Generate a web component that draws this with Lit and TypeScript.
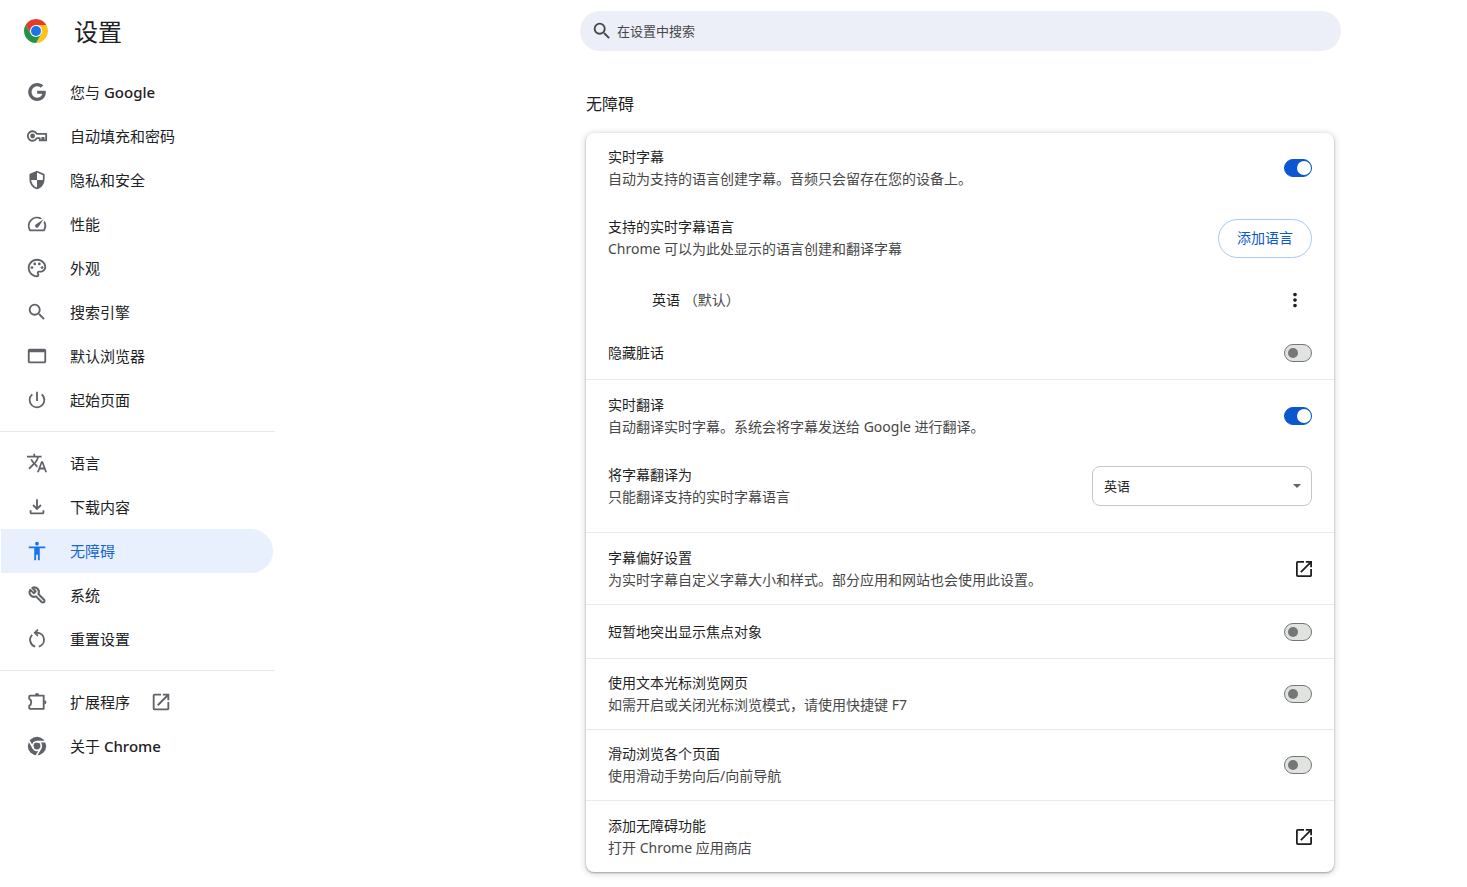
import { LitElement, html, css, svg, nothing } from "lit";
import { customElement, property } from "lit/decorators.js";

const icons: Record<string, unknown> = {
  google: svg`<path transform="translate(2.2 2.2) scale(.816)" d="M12.24 10.285V14.4h6.806c-.275 1.765-2.056 5.174-6.806 5.174-4.095 0-7.439-3.389-7.439-7.574s3.345-7.574 7.439-7.574c2.33 0 3.891.989 4.785 1.849l3.254-3.138C18.189 1.186 15.479 0 12.24 0c-6.635 0-12 5.365-12 12s5.365 12 12 12c6.926 0 11.52-4.869 11.52-11.726 0-.788-.085-1.39-.189-1.989H12.24z"/>`,
  key: svg`<path d="M11.800 9.600H22V16.800H19.300V14H17.700V16.800H15V14.400H11.800A5.200 5.200 0 1 1 11.800 9.600Z" fill="none" stroke="currentColor" stroke-width="2" stroke-linejoin="round"/><circle cx="7.200" cy="12" r="2.600"/>`,
  shield: svg`<path transform="translate(23 1) scale(-.917 .917)" d="M12 1L3 5v6c0 5.550 3.840 10.740 9 12 5.160-1.260 9-6.450 9-12V5l-9-4zm0 10.990h7c-.53 4.120-3.280 7.790-7 8.940V12H5V6.300l7-3.110v8.800z"/>`,
  speed: svg`<path d="m20.38 8.57-1.23 1.85a8 8 0 0 1-.22 7.58H5.07A8 8 0 0 1 15.58 6.85l1.85-1.23A10 10 0 0 0 3.35 19a2 2 0 0 0 1.72 1h13.85a2 2 0 0 0 1.740-1 10 10 0 0 0-.27-10.440zm-9.790 6.840a2 2 0 0 0 2.830 0l5.660-8.490-8.490 5.660a2 2 0 0 0 0 2.830z"/>`,
  palette: svg`<path d="M12 22C6.490 22 2 17.510 2 12S6.490 2 12 2s10 4.040 10 9c0 3.310-2.690 6-6 6h-1.770c-.28 0-.5.22-.5.5 0 .12.05.23.13.33.41.47.64 1.060.64 1.670A2.500 2.500 0 0 1 12 22zm0-18c-4.410 0-8 3.590-8 8s3.590 8 8 8c.28 0 .5-.22.5-.5a.54.54 0 0 0-.14-.35c-.41-.46-.63-1.050-.63-1.650a2.500 2.500 0 0 1 2.500-2.500H16c2.210 0 4-1.790 4-4 0-3.860-3.590-7-8-7z"/><circle cx="6.500" cy="11.500" r="1.500"/><circle cx="9.500" cy="7.500" r="1.500"/><circle cx="14.500" cy="7.500" r="1.500"/><circle cx="17.500" cy="11.500" r="1.500"/>`,
  search: svg`<path d="M15.500 14h-.79l-.28-.27A6.471 6.471 0 0 0 16 9.500 6.500 6.500 0 1 0 9.500 16c1.610 0 3.090-.59 4.230-1.570l.27.28v.79l5 4.990L20.490 19l-4.990-5zm-6 0C7.010 14 5 11.990 5 9.500S7.010 5 9.500 5 14 7.010 14 9.500 11.990 14 9.500 14z"/>`,
  browser: svg`<path d="M20 4H4c-1.100 0-2 .9-2 2v12c0 1.100.9 2 2 2h16c1.100 0 2-.9 2-2V6c0-1.100-.9-2-2-2zm0 14H4V8h16v10z"/>`,
  power: svg`<path d="M13 3h-2v10h2V3zm4.830 2.170-1.420 1.420A6.920 6.920 0 0 1 19 12c0 3.870-3.130 7-7 7A6.995 6.995 0 0 1 7.580 6.580L6.170 5.170A8.932 8.932 0 0 0 3 12a9 9 0 0 0 18 0c0-2.740-1.230-5.180-3.170-6.830z"/>`,
  translate: svg`<path d="m12.870 15.070-2.540-2.510.03-.03A17.520 17.520 0 0 0 14.070 6H17V4h-7V2H8v2H1v1.990h11.170C11.500 7.920 10.440 9.750 9 11.350 8.070 10.320 7.300 9.190 6.690 8h-2c.73 1.630 1.730 3.170 2.980 4.560l-5.090 5.020L4 19l5-5 3.110 3.110.76-2.040zM18.500 10h-2L12 22h2l1.120-3h4.750L21 22h2l-4.500-12zm-2.620 7 1.620-4.330L19.120 17h-3.240z"/>`,
  download: svg`<path d="m12 15.500-5-5 1.400-1.400 2.600 2.600V3.500h2v8.200l2.600-2.600L17 10.500l-5 5zM6 20c-1.100 0-2-.9-2-2v-2.500h2V18h12v-2.500h2V18c0 1.100-.9 2-2 2H6z"/>`,
  accessibility: svg`<path d="M12 2c1.100 0 2 .9 2 2s-.9 2-2 2-2-.9-2-2 .9-2 2-2zm9 7h-6v13h-2v-6h-2v6H9V9H3V7h18v2z"/>`,
  wrench: svg`<path d="M4.700 6.400 8.600 10 10.600 8 6.900 4.300A4.900 4.900 0 0 1 13.500 10.900L19.700 17.100A1.800 1.800 0 0 1 17.100 19.700L10.900 13.500A4.900 4.900 0 0 1 4.700 6.400Z" fill="none" stroke="currentColor" stroke-width="2.200" stroke-linejoin="round"/>`,
  reset: svg`<g fill="none" stroke="currentColor" stroke-width="2"><path d="M10 20.300A7.700 7.700 0 0 1 6.800 7.400M14 20.300A7.700 7.700 0 0 0 12.500 5.200H10"/><path d="M13 1.800 9.600 5.200 13 8.600"/></g>`,
  extension: svg`<path d="M4.500 5H19.300V19.500H4.500a1 1 0 0 1-1-1V16.200a4.600 4.600 0 0 0 0-7.900V6a1 1 0 0 1 1-1Z" fill="none" stroke="currentColor" stroke-width="2" stroke-linejoin="round"/><path d="M9.700 4.500a2.300 2.300 0 0 1 4.600 0zM20 10a2.300 2.300 0 0 1 0 4.600z"/>`,
  chrome: svg`<circle cx="12" cy="12" r="10"/><circle cx="12" cy="12" r="4.700" fill="none" stroke="#fff" stroke-width="1.800"/><path d="M12 7.300h9.500M7.900 14.350 3.200 6.200M16.100 14.350 11.400 22.500" fill="none" stroke="#fff" stroke-width="1.800"/>`,
  external: svg`<path d="M19 19H5V5h7V3H5a2 2 0 0 0-2 2v14a2 2 0 0 0 2 2h14c1.100 0 2-.9 2-2v-7h-2v7zM14 3v2h3.590l-9.830 9.830 1.410 1.410L19 6.410V10h2V3h-7z"/>`,
  more: svg`<path d="M12 8c1.100 0 2-.9 2-2s-.9-2-2-2-2 .9-2 2 .9 2 2 2zm0 2c-1.100 0-2 .9-2 2s.9 2 2 2 2-.9 2-2-.9-2-2-2zm0 6c-1.100 0-2 .9-2 2s.9 2 2 2 2-.9 2-2-.9-2-2-2z"/>`,
};

const icon = (name: string, cls = "icon", box = "0 0 24 24") =>
  html`<svg class=${cls} viewBox=${box} fill="currentColor" aria-hidden="true">${icons[name]}</svg>`;

interface NavEntry {
  icon: string;
  text: string;
  latin?: string;
  current?: boolean;
  external?: boolean;
}

const groups: NavEntry[][] = [
  [
    { icon: "google", text: "您与 ", latin: "Google" },
    { icon: "key", text: "自动填充和密码" },
    { icon: "shield", text: "隐私和安全" },
    { icon: "speed", text: "性能" },
    { icon: "palette", text: "外观" },
    { icon: "search", text: "搜索引擎" },
    { icon: "browser", text: "默认浏览器" },
    { icon: "power", text: "起始页面" },
  ],
  [
    { icon: "translate", text: "语言" },
    { icon: "download", text: "下载内容" },
    { icon: "accessibility", text: "无障碍", current: true },
    { icon: "wrench", text: "系统" },
    { icon: "reset", text: "重置设置" },
  ],
  [
    { icon: "extension", text: "扩展程序", external: true },
    { icon: "chrome", text: "关于 ", latin: "Chrome" },
  ],
];

@customElement("settings-nav")
export class SettingsNav extends LitElement {
  static styles = css`
    :host { display: block; }
    .brand { display: flex; align-items: center; gap: 26px; height: 62px; padding-left: 24px; margin-bottom: 8px; }
    .logo { width: 24px; height: 24px; }
    .title { margin: 0; padding-top: 2px; font-size: 24px; line-height: 32px; font-weight: 400; color: #202124; }
    .group { list-style: none; margin: 0; padding: 0 2px 0 1px; }
    .divider { height: 1px; margin: 9px 0; border: 0; background: #e8eaed; }
    .link { display: flex; align-items: center; height: 44px; padding-left: 25px; border-radius: 0 22px 22px 0; color: #202124; text-decoration: none; font-size: 15px; line-height: 22px; }
    .link.current { background: #e8f0fe; color: #1967d2; }
    .icon { width: 22px; height: 22px; margin-right: 22px; color: #5f6368; flex: none; }
    .current .icon { color: #1a73e8; }
    .latin { font-weight: 500; }
    .out { width: 22px; height: 22px; margin-left: 20px; color: #5f6368; }
  `;

  render() {
    return html`
      <header class="brand">
        <svg class="logo" viewBox="0 0 48 48" aria-hidden="true">
          <path fill="#e33b2e" d="M24 12H44.780A24 24 0 0 0 3.220 12L13.610 30Z" />
          <path fill="#fcc31e" d="M34.390 30 24 48A24 24 0 0 0 44.780 12H24Z" />
          <path fill="#229342" d="M13.610 30 3.220 12A24 24 0 0 0 24 48L34.390 30Z" />
          <circle cx="24" cy="24" r="12" fill="#fff" />
          <circle cx="24" cy="24" r="10" fill="#1a73e8" />
        </svg>
        <h1 class="title">设置</h1>
      </header>
      <nav aria-label="设置">
        ${groups.map(
          (group, i) => html`
            ${i > 0 ? html`<hr class="divider" />` : nothing}
            <ul class="group">
              ${group.map(
                (e) => html`<li>
                  <a class=${e.current ? "link current" : "link"} href="#${e.icon}" aria-current=${e.current ? "page" : nothing}
                    >${icon(e.icon)}<span>${e.text}${e.latin ? html`<span class="latin">${e.latin}</span>` : nothing}</span>${e.external ? icon("external", "out") : nothing}</a>
                </li>`
              )}
            </ul>
          `
        )}
      </nav>
    `;
  }
}

@customElement("settings-row")
export class SettingsRow extends LitElement {
  @property() heading = "";
  @property() detail = "";
  @property() control = "toggle";
  @property({ type: Boolean }) on = false;

  static styles = css`
    :host { display: block; }
    .row { display: flex; align-items: center; justify-content: space-between; gap: 16px; box-sizing: border-box; min-height: 53px; padding: 13px 22px; font-size: 14px; line-height: 22px; }
    .heading { display: block; color: #1f1f1f; }
    .detail { display: block; color: #474747; }
    .toggle { appearance: none; box-sizing: border-box; display: flex; align-items: center; flex: none; width: 28px; height: 18px; margin: 0; padding: 0 3px; border: 1px solid #747775; border-radius: 9px; background: #e1e3e1; }
    .toggle::before { content: ""; width: 10px; height: 10px; border-radius: 50%; background: #747775; }
    .toggle:checked { justify-content: flex-end; padding: 0; border-color: #0b57d0; background: #0b57d0; }
    .toggle:checked::before { width: 14px; height: 14px; background: #fff; }
    .add { box-sizing: border-box; flex: none; height: 39px; padding: 0 18px; border: 1px solid #a8c7fa; border-radius: 20px; background: #fff; color: #0b57d0; font: inherit; }
    .open { display: flex; flex: none; padding: 0; border: 0; background: none; color: #1f1f1f; }
    .open-icon { width: 16px; height: 16px; }
    .picker { display: grid; flex: 0 1 220px; align-items: center; }
    .select { grid-area: 1 / 1; appearance: none; box-sizing: border-box; width: 100%; height: 40px; padding: 0 11px; border: 1px solid #c4c7c5; border-radius: 8px; background: #fff; color: #1f1f1f; font: inherit; font-size: 13px; }
    .caret { grid-area: 1 / 1; justify-self: end; width: 8px; height: 4px; margin-right: 11px; color: #5f6368; pointer-events: none; }
  `;

  private renderControl() {
    switch (this.control) {
      case "add":
        return html`<button class="add" id="c" type="button">添加语言</button>`;
      case "open":
        return html`<button class="open" id="c" type="button">${icon("external", "open-icon", "3 3 18 18")}</button>`;
      case "select":
        return html`<div class="picker">
          <select class="select" id="c"><option>英语</option></select>
          <svg class="caret" viewBox="0 0 8 4" aria-hidden="true"><path d="M0 0h8L4 4z" fill="currentColor" /></svg>
        </div>`;
      default:
        return html`<input class="toggle" id="c" type="checkbox" role="switch" .checked=${this.on} />`;
    }
  }

  render() {
    return html`<div class="row">
      <label for="c">
        <span class="heading">${this.heading}</span>
        ${this.detail ? html`<span class="detail">${this.detail}</span>` : nothing}
      </label>
      ${this.renderControl()}
    </div>`;
  }
}

@customElement("app-root")
export class AppRoot extends LitElement {
  static styles = css`
    :host { display: flex; min-height: 100vh; background: #fff; color: #1f1f1f; font-family: "Noto Sans", "Noto Sans CJK SC", sans-serif; }
    .side { flex: none; width: 275px; }
    .main { flex: 1; min-width: 0; display: flex; justify-content: flex-end; box-sizing: border-box; padding: 11px 126px 14px 24px; }
    .column { flex: 0 1 761px; min-width: 0; }
    .search { display: flex; align-items: center; gap: 4px; height: 40px; padding: 0 11px; border-radius: 20px; background: #eceff7; color: #474747; }
    .search-icon { width: 22px; height: 22px; flex: none; }
    .field { flex: 1; min-width: 0; padding: 0; border: 0; outline: 0; background: none; color: #474747; font: inherit; font-size: 13px; line-height: 20px; }
    .field::placeholder { color: #474747; opacity: 1; }
    .section { padding: 42px 7px 0 6px; }
    .section-title { margin: 0 0 18px; font-size: 16px; line-height: 22px; font-weight: 400; }
    .card { border-radius: 8px; background: #fff; box-shadow: 0 1px 2px rgba(60, 64, 67, 0.4), 0 1px 6px 1px rgba(60, 64, 67, 0.2); }
    .block.tall { padding-top: 1px; }
    .block.roomy { padding-bottom: 11px; }
    .block + .block { border-top: 1px solid #ebebeb; }
    .language { display: flex; align-items: center; justify-content: space-between; min-height: 53px; padding: 0 28px 0 66px; font-size: 14px; line-height: 22px; }
    .default { color: #474747; }
    .menu { display: flex; padding: 0; border: 0; background: none; color: #1f1f1f; }
    .menu-icon { width: 22px; height: 22px; }
  `;

  render() {
    return html`
      <settings-nav class="side"></settings-nav>
      <main class="main">
        <div class="column">
          <label class="search">
            ${icon("search", "search-icon")}
            <input class="field" type="search" placeholder="在设置中搜索" aria-label="在设置中搜索" />
          </label>
          <section class="section">
            <h2 class="section-title">无障碍</h2>
            <div class="card">
              <div class="block">
                <settings-row heading="实时字幕" detail="自动为支持的语言创建字幕。音频只会留存在您的设备上。" on></settings-row>
                <settings-row heading="支持的实时字幕语言" detail="Chrome 可以为此处显示的语言创建和翻译字幕" control="add"></settings-row>
                <div class="language">
                  <span>英语 <span class="default">（默认）</span></span>
                  <button class="menu" type="button" aria-label="更多操作">${icon("more", "menu-icon")}</button>
                </div>
                <settings-row heading="隐藏脏话"></settings-row>
              </div>
              <div class="block tall roomy">
                <settings-row heading="实时翻译" detail="自动翻译实时字幕。系统会将字幕发送给 Google 进行翻译。" on></settings-row>
                <settings-row heading="将字幕翻译为" detail="只能翻译支持的实时字幕语言" control="select"></settings-row>
              </div>
              <div class="block tall">
                <settings-row heading="字幕偏好设置" detail="为实时字幕自定义字幕大小和样式。部分应用和网站也会使用此设置。" control="open"></settings-row>
              </div>
              <div class="block">
                <settings-row heading="短暂地突出显示焦点对象"></settings-row>
              </div>
              <div class="block">
                <settings-row heading="使用文本光标浏览网页" detail="如需开启或关闭光标浏览模式，请使用快捷键 F7"></settings-row>
              </div>
              <div class="block">
                <settings-row heading="滑动浏览各个页面" detail="使用滑动手势向后/向前导航"></settings-row>
              </div>
              <div class="block tall">
                <settings-row heading="添加无障碍功能" detail="打开 Chrome 应用商店" control="open"></settings-row>
              </div>
            </div>
          </section>
        </div>
      </main>
    `;
  }
}
